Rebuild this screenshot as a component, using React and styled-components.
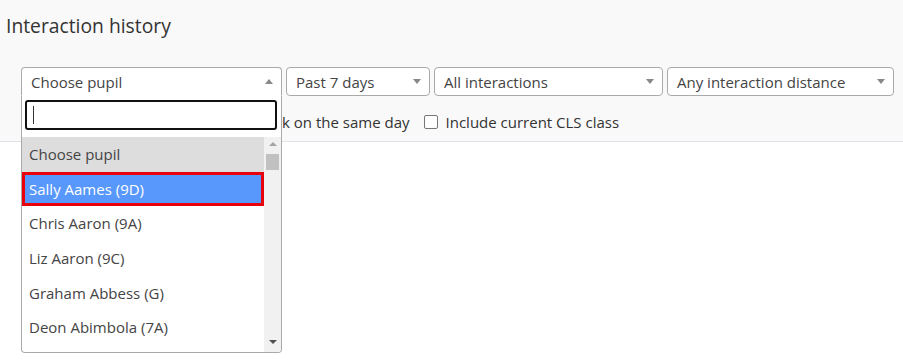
import React from 'react'
import styled, { createGlobalStyle } from 'styled-components'

const GlobalStyle = createGlobalStyle`
  html, body { margin: 0; padding: 0; background: #fff; height: 100%; }
  #root { min-height: 100%; }
  body { font-family: "Open Sans", "Noto Sans", sans-serif; color: #333; }
`;

const Page = styled.div`
  min-height: 100vh;
  display: flex;
  flex-direction: column;
`;

const Header = styled.div`
  background: #f9f9f9;
  border-bottom: 1px solid #dde3e8;
  padding: 12px 0 0 6px;
  height: 142px;
  box-sizing: border-box;
  flex: none;
`;

const Content = styled.div`
  flex: 1;
  background: #fff;
`;

const Title = styled.h1`
  margin: 0;
  font-size: 19.3px;
  font-weight: 400;
  line-height: 27px;
  color: #333;
`;

const Filters = styled.div`
  display: flex;
  gap: 4px;
  margin: 28px 0 0 15px;
`;

const SelectBox = styled.div`
  position: relative;
  width: ${p => p.$w}px;
  height: 29px;
  box-sizing: border-box;
  background: #fff;
  border: 1px solid #aaa;
  border-radius: ${p => (p.$open ? '4px 4px 0 0' : '4px')};
  border-bottom-color: ${p => (p.$open ? 'transparent' : '#aaa')};
  display: flex;
  align-items: center;
  padding: 0 8px 0 9px;
  font-size: 15px;
  color: #444;
  flex: none;
  z-index: ${p => (p.$open ? 5 : 1)};
`;

const SelectText = styled.span`
  flex: 1;
  white-space: nowrap;
`;

const Arrow = styled.span`
  width: 0;
  height: 0;
  border-left: 4px solid transparent;
  border-right: 4px solid transparent;
  ${p => (p.$up ? 'border-bottom: 5px solid #888;' : 'border-top: 5px solid #888;')}
`;

const Dropdown = styled.div`
  position: absolute;
  top: 28px;
  left: -1px;
  width: 261px;
  height: 257px;
  box-sizing: border-box;
  background: #fff;
  border: 1px solid #aaa;
  border-top: none;
  border-radius: 0 0 4px 4px;
  display: flex;
  flex-direction: column;
  overflow: hidden;
`;

const Search = styled.div`
  margin: 4px 4px 7px 3px;
  height: 30px;
  flex: none;
  box-sizing: border-box;
  border: 2px solid #111;
  border-radius: 3px;
  display: flex;
  align-items: center;
  padding-left: 6px;
`;

const Caret = styled.span`
  width: 1px;
  height: 18px;
  background: #333;
`;

const ListArea = styled.div`
  display: flex;
  flex: 1;
  min-height: 0;
`;

const List = styled.div`
  flex: 1;
  display: flex;
  flex-direction: column;
  overflow: hidden;
`;

const Option = styled.div`
  height: 34.6px;
  flex: none;
  box-sizing: border-box;
  display: flex;
  align-items: center;
  padding-left: ${p => (p.$hl ? '4px' : '7px')};
  font-size: 15px;
  color: ${p => (p.$hl ? '#fff' : '#444')};
  background: ${p => (p.$hl ? '#5897fb' : p.$sel ? '#ddd' : '#fff')};
  border: ${p => (p.$hl ? '3px solid #e8000b' : 'none')};
`;

const Scrollbar = styled.div`
  width: 17px;
  background: #f1f1f1;
  display: flex;
  flex-direction: column;
  align-items: center;
  padding: 5px 0 8px;
  box-sizing: border-box;
`;

const ScrollArrow = styled.span`
  width: 0;
  height: 0;
  border-left: 4px solid transparent;
  border-right: 4px solid transparent;
  ${p => (p.$up ? 'border-bottom: 4px solid #a3a3a3;' : 'border-top: 4px solid #505050;')}
`;

const Thumb = styled.div`
  width: 13px;
  height: 16px;
  background: #c1c1c1;
  margin-top: 8px;
  flex: none;
`;

const Spacer = styled.div`
  flex: 1;
`;

const Options = styled.div`
  display: flex;
  align-items: center;
  margin: 16px 0 0 17px;
  font-size: 15px;
  color: #333;
  gap: 14px;
`;

const CheckLabel = styled.label`
  display: flex;
  align-items: center;
  gap: 8px;
  white-space: nowrap;
`;

const Box = styled.span`
  width: 12px;
  height: 12px;
  border: 1px solid #767676;
  border-radius: 2px;
  background: #fff;
  flex: none;
`;

const pupils = ['Sally Aames (9D)', 'Chris Aaron (9A)', 'Liz Aaron (9C)', 'Graham Abbess (G)', 'Deon Abimbola (7A)'];

export default function App() {
  return (
    <Page>
      <GlobalStyle />
      <Header>
        <Title>Interaction history</Title>
        <Filters>
          <SelectBox $w={261} $open>
            <SelectText>Choose pupil</SelectText>
            <Arrow $up />
            <Dropdown>
              <Search><Caret /></Search>
              <ListArea>
                <List>
                  <Option $sel>Choose pupil</Option>
                  {pupils.map((p, i) => (
                    <Option key={p} $hl={i === 0}>{p}</Option>
                  ))}
                </List>
                <Scrollbar>
                  <ScrollArrow $up />
                  <Thumb />
                  <Spacer />
                  <ScrollArrow />
                </Scrollbar>
              </ListArea>
            </Dropdown>
          </SelectBox>
          <SelectBox $w={144}>
            <SelectText>Past 7 days</SelectText>
            <Arrow />
          </SelectBox>
          <SelectBox $w={229}>
            <SelectText>All interactions</SelectText>
            <Arrow />
          </SelectBox>
          <SelectBox $w={227}>
            <SelectText>Any interaction distance</SelectText>
            <Arrow />
          </SelectBox>
        </Filters>
        <Options>
          <CheckLabel><Box />Only show pupils in the same week on the same day</CheckLabel>
          <CheckLabel><Box />Include current CLS class</CheckLabel>
        </Options>
      </Header>
      <Content />
    </Page>
  )
}
